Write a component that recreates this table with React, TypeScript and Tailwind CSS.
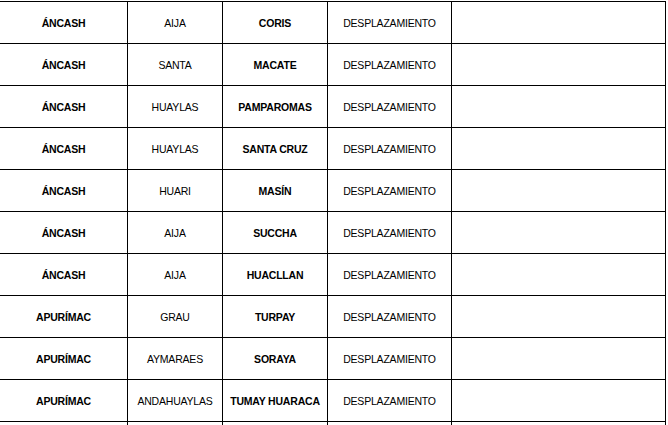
const rows = [
  ["ÁNCASH", "AIJA", "CORIS"],
  ["ÁNCASH", "SANTA", "MACATE"],
  ["ÁNCASH", "HUAYLAS", "PAMPAROMAS"],
  ["ÁNCASH", "HUAYLAS", "SANTA CRUZ"],
  ["ÁNCASH", "HUARI", "MASÍN"],
  ["ÁNCASH", "AIJA", "SUCCHA"],
  ["ÁNCASH", "AIJA", "HUACLLAN"],
  ["APURÍMAC", "GRAU", "TURPAY"],
  ["APURÍMAC", "AYMARAES", "SORAYA"],
  ["APURÍMAC", "ANDAHUAYLAS", "TUMAY HUARACA"],
  ["", "", ""],
];

export default function App() {
  return (
    <div
      className="w-[668px] h-[425px] bg-white overflow-hidden text-black text-[10.5px] tracking-[-0.2px]"
      style={{ fontFamily: '"Liberation Sans", Arial, sans-serif' }}
    >
      <div className="mt-px w-[666px] border-t border-black">
        {rows.map(([region, province, district], i) => (
          <div key={i} className="flex h-[42px] border-b border-black">
            <div className="w-[128px] pt-[2px] border-r border-black flex items-center justify-center font-bold">
              {region}
            </div>
            <div className="w-[95px] pt-[2px] border-r border-black flex items-center justify-center">
              {province}
            </div>
            <div className="w-[105px] pt-[2px] border-r border-black flex items-center justify-center font-bold">
              {district}
            </div>
            <div className="w-[124px] pt-[2px] border-r border-black flex items-center justify-center">
              {region ? "DESPLAZAMIENTO" : ""}
            </div>
            <div className="w-[214px] border-r border-black" />
          </div>
        ))}
      </div>
    </div>
  );
}
